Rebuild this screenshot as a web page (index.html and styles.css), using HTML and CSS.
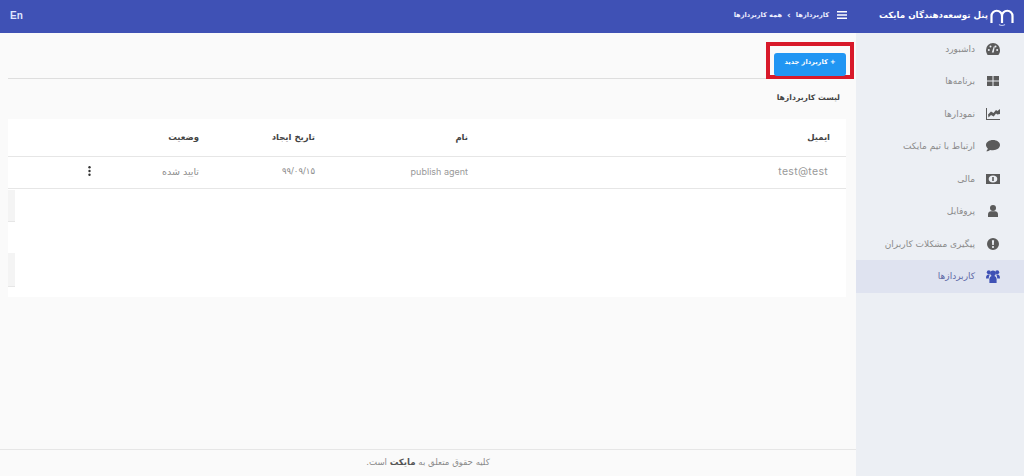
FILE: index.html
```html
<!DOCTYPE html>
<html lang="fa" dir="rtl">
<head>
<meta charset="utf-8">
<title>پنل توسعه‌دهندگان مایکت</title>
<link rel="stylesheet" href="styles.css">
</head>
<body>
<header class="topbar">
  <div class="brand">
    <svg class="logo" viewBox="0 0 24 19" fill="none" stroke="#fff" stroke-width="2.2"><path d="M1.500 15V8A5.200 5.200 0 0 1 12 8V15M12 8A5.200 5.200 0 0 1 22.500 8V15"/><path d="M9 16.500q3 2 6 0" stroke="#b9c3f0" stroke-width="1.200"/></svg>
    <span>پنل توسعه‌دهندگان مایکت</span>
  </div>
  <svg class="burger" viewBox="0 0 10 8" fill="#fff"><path d="M0 0h10v1.500H0zM0 3.200h10v1.500H0zM0 6.500h10V8H0z"/></svg>
  <nav class="crumbs"><span>کاربردازها</span><i>›</i><span>همه کاربردازها</span></nav>
  <div class="lang">En</div>
</header>
<div class="layout">
  <aside class="sidebar">
    <a class="item"><svg viewBox="0 0 14 12"><path d="M7 0a7 7 0 0 0-7 7c0 1.800.6 3.500 1.600 5h10.800A7 7 0 0 0 14 7a7 7 0 0 0-7-7z"/><g fill="#eceff4"><circle cx="2.800" cy="7" r="1"/><circle cx="4.500" cy="3.500" r="1"/><circle cx="9.500" cy="3.500" r="1"/><circle cx="11.200" cy="7" r="1"/><path d="M5.800 9.500 7.800 3.500l.9.300-1 5.700z"/></g></svg><span>داشبورد</span></a>
    <a class="item"><svg viewBox="0 0 14 12"><path d="M1 1h5.500v4.600H1zM7.500 1H13v4.600H7.500zM1 6.600h5.500V11H1zM7.500 6.600H13V11H7.500z"/></svg><span>برنامه‌ها</span></a>
    <a class="item"><svg viewBox="0 0 14 12"><path d="M0 0h1v11h13v1H0z"/><path d="M2 6.500l3-3 2.500 1.500L10 2l1.500 1L14 1v5l-2.700.6L10 5.500 7.700 8.500 5 7 2.500 9.500z"/></svg><span>نمودارها</span></a>
    <a class="item"><svg viewBox="0 0 14 12"><path d="M7 0C3.100 0 0 2.300 0 5.100c0 1.300.7 2.500 1.800 3.400-.2 1-.9 2-1.500 2.700 1.500 0 2.900-.6 3.800-1.300.9.300 1.900.4 2.900.4 3.900 0 7-2.300 7-5.200S10.900 0 7 0z"/></svg><span>ارتباط با تیم مایکت</span></a>
    <a class="item"><svg viewBox="0 0 14 12"><path d="M0 1h14v10H0z"/><path fill="#eceff4" d="M7 2.500c-2.600 0-4.300 1.500-4.300 3.500S4.400 9.500 7 9.500 11.300 8 11.300 6 9.600 2.500 7 2.500z"/><path d="M6.200 4h1.600v4H6.200z"/></svg><span>مالی</span></a>
    <a class="item"><svg viewBox="0 0 14 12"><circle cx="7" cy="3" r="3"/><path d="M2 12V9.500C2 7.500 3.500 6.300 5 6.300h4c1.500 0 3 1.200 3 3.200V12z"/></svg><span>پروفایل</span></a>
    <a class="item"><svg viewBox="0 0 14 14"><path fill-rule="evenodd" d="M7 0a7 7 0 1 0 0 14A7 7 0 0 0 7 0zM5.700 2.600h2.600L7.900 8.300H6.100zM7 9.200a1.300 1.300 0 1 1 0 2.600 1.300 1.300 0 0 1 0-2.600z"/></svg><span>پیگیری مشکلات کاربران</span></a>
    <a class="item active"><svg viewBox="0 0 14 13"><circle cx="2.800" cy="2.200" r="2"/><circle cx="11.200" cy="2.200" r="2"/><circle cx="7" cy="3.300" r="2.800"/><path d="M0 8.500C0 5.500 1 4.500 2.500 4.500H4C3 5.700 2.800 7 2.800 8.500zM14 8.500C14 5.500 13 4.500 11.500 4.500H10c1 1.200 1.200 2.500 1.200 4z"/><path d="M3.400 13V9.300C3.400 7.300 4.600 6 5.800 6h2.400c1.200 0 2.400 1.300 2.400 3.300V13z"/></svg><span>کاربردازها</span></a>
  </aside>
  <main class="main">
    <div class="content">
      <div class="toolbar">
        <div class="mark"><button class="add">+ کاربرداز جدید</button></div>
      </div>
      <h1 class="title">لیست کاربردازها</h1>
      <section class="card">
        <table class="grid">
          <thead>
            <tr><th class="c-email">ایمیل</th><th class="c-name">نام</th><th class="c-date">تاریخ ایجاد</th><th class="c-status">وضعیت</th><th></th></tr>
          </thead>
          <tbody>
            <tr>
              <td class="email">test@test</td>
              <td class="name">publish agent</td>
              <td>۹۹/۰۹/۱۵</td>
              <td class="status">تایید شده</td>
              <td class="act"><svg class="dots" viewBox="0 0 3 10" fill="#333"><circle cx="1.500" cy="1.200" r="1.200"/><circle cx="1.500" cy="5" r="1.200"/><circle cx="1.500" cy="8.800" r="1.200"/></svg></td>
            </tr>
          </tbody>
        </table>
        <div class="rest"><div class="sliver"></div><div class="sliver second"></div></div>
      </section>
    </div>
    <footer class="foot">کلیه حقوق متعلق به <b>مایکت</b> است.</footer>
  </main>
</div>
</body>
</html>
```
FILE: styles.css
```css
* { box-sizing: border-box; }
html, body { margin: 0; height: 100%; }
body {
  width: 1024px; height: 476px; overflow: hidden;
  font-family: "DejaVu Sans", "Noto Sans", sans-serif;
  background: #fafafa; color: #555;
  display: flex; flex-direction: column;
}
.topbar {
  height: 33px; flex: none; background: #3f51b5; color: #fff;
  display: flex; align-items: center; padding: 0 10px 3px 10px;
}
.brand { width: 167px; flex: none; display: flex; align-items: center; gap: 2px; font-size: 8.700px; font-weight: bold; white-space: nowrap; }
.logo { width: 24px; height: 19px; flex: none; margin-top: 4px; }
.burger { width: 10px; height: 8px; flex: none; margin-left: 8px; }
.crumbs { display: flex; align-items: center; gap: 5px; font-size: 6.600px; font-weight: bold; white-space: nowrap; color: #eef; }
.crumbs i { font-style: normal; font-size: 9px; line-height: 8px; }
.lang { margin-right: auto; font-size: 10px; font-weight: bold; color: #dfe6ff; font-family: "Liberation Sans", sans-serif; }
.layout { flex: 1; display: flex; min-height: 0; }
.sidebar { width: 168px; flex: none; background: #eceff4; }
.item {
  height: 32.500px; display: flex; align-items: center; gap: 11px;
  padding-right: 24px; font-size: 9px; color: #8a8a8a; white-space: nowrap;
}
.item:first-child { margin-top: -0.500px; }
.item svg { width: 14px; height: 12px; flex: none; fill: #5b5b5b; }
.item.active { background: #dfe3f0; color: #5f6aa6; }
.item.active svg { height: 13px; fill: #3f51b5; }
.main { flex: 1; min-width: 0; display: flex; flex-direction: column; }
.content { flex: 1; padding: 0 10px 0 8px; }
.toolbar { height: 46px; border-bottom: 1px solid #dedede; padding-top: 9px; }
.mark { width: 88px; height: 37px; border: 4px solid #d8192a; margin-right: -8px; padding: 3px 4px 3px 4px; }
.add {
  width: 100%; height: 100%; border: 0; border-radius: 3px; padding: 0 0 4px;
  background: #2196f3; color: #fff; font: bold 6.600px "DejaVu Sans", sans-serif;
}
.title { margin: 0; height: 40px; padding: 12px 6px 0 0; font-size: 7.700px; font-weight: bold; color: #444; line-height: 14px; }
.card { background: #fff; height: 178px; display: flex; flex-direction: column; }
.grid { width: 100%; border-collapse: collapse; table-layout: fixed; }
.grid th { height: 37px; font-size: 8.500px; font-weight: bold; color: #444; text-align: right; padding: 0 16px 0 0; border-bottom: 1px solid #e6e6e6; }
.grid td { height: 32px; font-size: 8.500px; color: #8c8c8c; padding: 0 16px 2px 0; border-bottom: 1px solid #e6e6e6; }
.c-email { width: 362px; }
.c-name { width: 153px; }
.c-date { width: 116px; }
.c-status { width: 110px; }
.grid .status { font-size: 9.500px; }
.grid .email { font-family: "Inter", "Liberation Sans", sans-serif; font-size: 10.500px; color: #999; direction: ltr; text-align: right; letter-spacing: 0.300px; padding-right: 18px; }
.grid .name { font-family: "Inter", "Liberation Sans", sans-serif; font-size: 9px; color: #999; text-align: right; direction: ltr; }
.grid .act { padding-right: 0; }
.dots { display: block; width: 3px; height: 10px; margin-right: 14px; }
.rest { direction: ltr; padding-top: 1px; }
.sliver { width: 7px; height: 32px; background: #f4f4f4; border-bottom: 1px solid #e6e6e6; }
.second { height: 34px; margin-top: 31px; }
.foot { height: 27px; flex: none; border-top: 1px solid #e6e6e6; text-align: center; font-size: 8.600px; line-height: 25px; color: #8a8a8a; }
.foot b { color: #555; }
```
